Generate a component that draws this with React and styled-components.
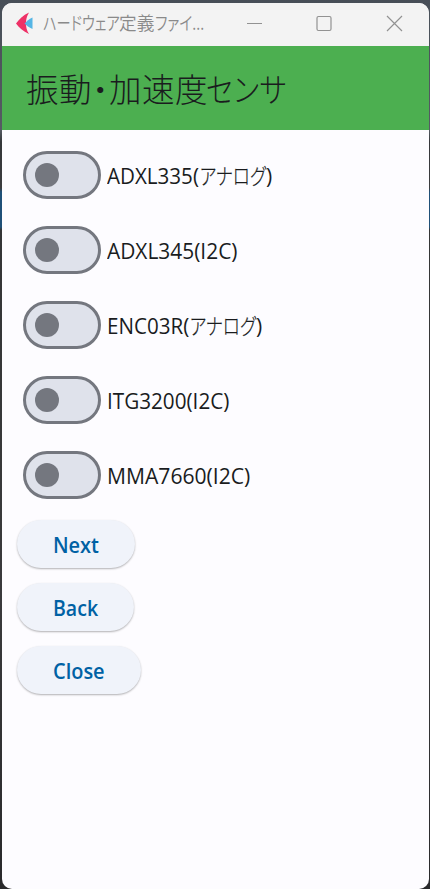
import React from "react";
import styled, { createGlobalStyle } from "styled-components";

const GlobalStyle = createGlobalStyle`
  * { box-sizing: border-box; }
  html, body { margin: 0; padding: 0; overflow: hidden; }
  body { font-family: "Open Sans", "Noto Sans CJK JP", sans-serif; color: #1a1c1e; }
`;

const Desktop = styled.div`
  width: 430px;
  height: 889px;
  padding: 3px 1px 0 2px;
  background: linear-gradient(
    #474e57 0, #555b63 130px, #35373a 142px, #3b3c3e 188px,
    #1f5078 192px, #1f5078 227px, #343536 230px, #3a3a3c 600px, #29292b 889px
  );
`;

const Window = styled.main`
  height: 886px;
  display: flex;
  flex-direction: column;
  overflow: hidden;
  border-radius: 10px;
  background: #fdfcff;
`;

const TitleBar = styled.header`
  flex: 0 0 43px;
  display: flex;
  align-items: center;
  padding: 0 26px 2px 13px;
  background: #f3f3f3;
  color: #929292;
`;

const Caption = styled.div`
  display: flex;
  flex: 0 0 192px;
  margin-left: 9px;
  padding-bottom: 3px;
  font: 350 18px/37px "Noto Sans CJK JP", sans-serif;
  color: #8a8a8a;
  white-space: nowrap;
`;

const Controls = styled.div`
  display: flex;
  flex: 1;
  justify-content: space-between;
  padding-left: 11px;
`;

const AppBar = styled.div`
  flex: 0 0 84px;
  padding-left: 24px;
  background: #4caf50;
`;

const Heading = styled.h1`
  display: flex;
  margin: 0;
  font: 300 32.5px/83px "Noto Sans CJK JP", sans-serif;
  letter-spacing: 0.5px;
  white-space: nowrap;
`;

const Run = styled.span`
  flex: none;
  width: ${(p) => p.$width}px;
  white-space: nowrap;
`;

const Glyphs = styled.span`
  display: inline-block;
  transform: scaleX(${(p) => p.$scale});
  transform-origin: 0 50%;
  font-feature-settings: ${(p) => (p.$tight ? '"palt"' : "normal")};
`;

const Text = ({ width, scale = 1, tight, children }) => (
  <Run $width={width}>
    <Glyphs $scale={scale} $tight={tight}>{children}</Glyphs>
  </Run>
);

const Content = styled.section`
  padding: 7px 15px;
`;

const SwitchRow = styled.label`
  display: flex;
  align-items: center;
  height: 75px;
  padding-left: 6px;
`;

const Track = styled.span`
  display: flex;
  align-items: center;
  width: 78px;
  height: 48px;
  padding-left: 9px;
  border: 3px solid #74777f;
  border-radius: 24px;
  background: #dfe2eb;
`;

const Thumb = styled.span`
  width: 24px;
  height: 24px;
  border-radius: 50%;
  background: #74777f;
`;

const Label = styled.span`
  display: flex;
  margin-left: 6px;
  padding-top: 3px;
  font-size: 21px;
  line-height: 30px;
  font-weight: 370;
`;

const Kana = styled.span`
  display: flex;
  font: 300 22px/27px "Noto Sans CJK JP", sans-serif;
  -webkit-text-stroke: 0.2px currentColor;
`;

const Actions = styled.div`
  display: flex;
  flex-direction: column;
  align-items: flex-start;
  gap: 15px;
  margin-top: 8px;
`;

const Action = styled.button`
  width: ${(p) => p.$width}px;
  height: 48px;
  padding: 2px 0 0 36px;
  border: 0;
  border-radius: 24px;
  background: #f0f3fa;
  box-shadow: 0 1px 2px rgba(0, 0, 0, 0.3);
  color: #0061a4;
  font: 600 21px/44px "Open Sans", sans-serif;
  text-align: left;
`;

const sensors = [
  { name: "ADXL335(", width: 93, scale: 0.98, kana: "アナログ" },
  { name: "ADXL345(I2C)", width: 131, scale: 0.995 },
  { name: "ENC03R(", width: 83, scale: 0.98, kana: "アナログ" },
  { name: "ITG3200(I2C)", width: 122, scale: 0.985 },
  { name: "MMA7660(I2C)", width: 144, scale: 1.005 },
];

const actions = [
  { name: "Next", width: 118, scale: 0.95 },
  { name: "Back", width: 117, scale: 0.93 },
  { name: "Close", width: 124, scale: 0.95 },
];

export default function App() {
  return (
    <>
      <GlobalStyle />
      <Desktop>
        <Window>
          <TitleBar>
            <svg width="19" height="24" viewBox="0 0 19 24">
              <path d="M14 .5C8 3 4 7.500 1 11.500c3 4 7 8 13 10.500C11.500 18 11 15 11 11.500s.5-7 3-11Z" fill="#ee3167" />
              <path d="M17.500 5.500V17C14 15.500 11.500 13.500 9.500 11.500c2-2 4.500-4.500 8-6Z" fill="#55b5e5" />
            </svg>
            <Caption>
              <Text width={76} scale={0.79} tight>ハードウェア</Text>
              <Text width={36} scale={0.98}>定義</Text>
              <Text width={50} scale={0.82} tight>ファイ...</Text>
            </Caption>
            <Controls>
              <svg width="17" height="17" viewBox="0 0 17 17" fill="none" stroke="currentColor">
                <path d="M1 8.500h15" />
              </svg>
              <svg width="17" height="17" viewBox="0 0 17 17" fill="none" stroke="currentColor">
                <rect x="1" y="1.500" width="14" height="14" rx="1.500" strokeWidth="1.200" />
              </svg>
              <svg width="17" height="17" viewBox="0 0 17 17" fill="none" stroke="currentColor">
                <path d="m1 1 15 15M16 1 1 16" strokeWidth="1.200" />
              </svg>
            </Controls>
          </TitleBar>
          <AppBar>
            <Heading>
              <Text width={66}>振動</Text>
              <Text width={17} tight>・</Text>
              <Text width={97}>加速度</Text>
              <Text width={84} scale={0.88} tight>センサ</Text>
            </Heading>
          </AppBar>
          <Content>
            {sensors.map((s) => (
              <SwitchRow key={s.name}>
                <Track><Thumb /></Track>
                <Label>
                  <Text width={s.width} scale={s.scale}>{s.name}</Text>
                  {s.kana && (
                    <>
                      <Kana><Text width={66} scale={0.8} tight>{s.kana}</Text></Kana>
                      <Text width={7}>)</Text>
                    </>
                  )}
                </Label>
              </SwitchRow>
            ))}
            <Actions>
              {actions.map((a) => (
                <Action key={a.name} $width={a.width}>
                  <Glyphs $scale={a.scale}>{a.name}</Glyphs>
                </Action>
              ))}
            </Actions>
          </Content>
        </Window>
      </Desktop>
    </>
  );
}
